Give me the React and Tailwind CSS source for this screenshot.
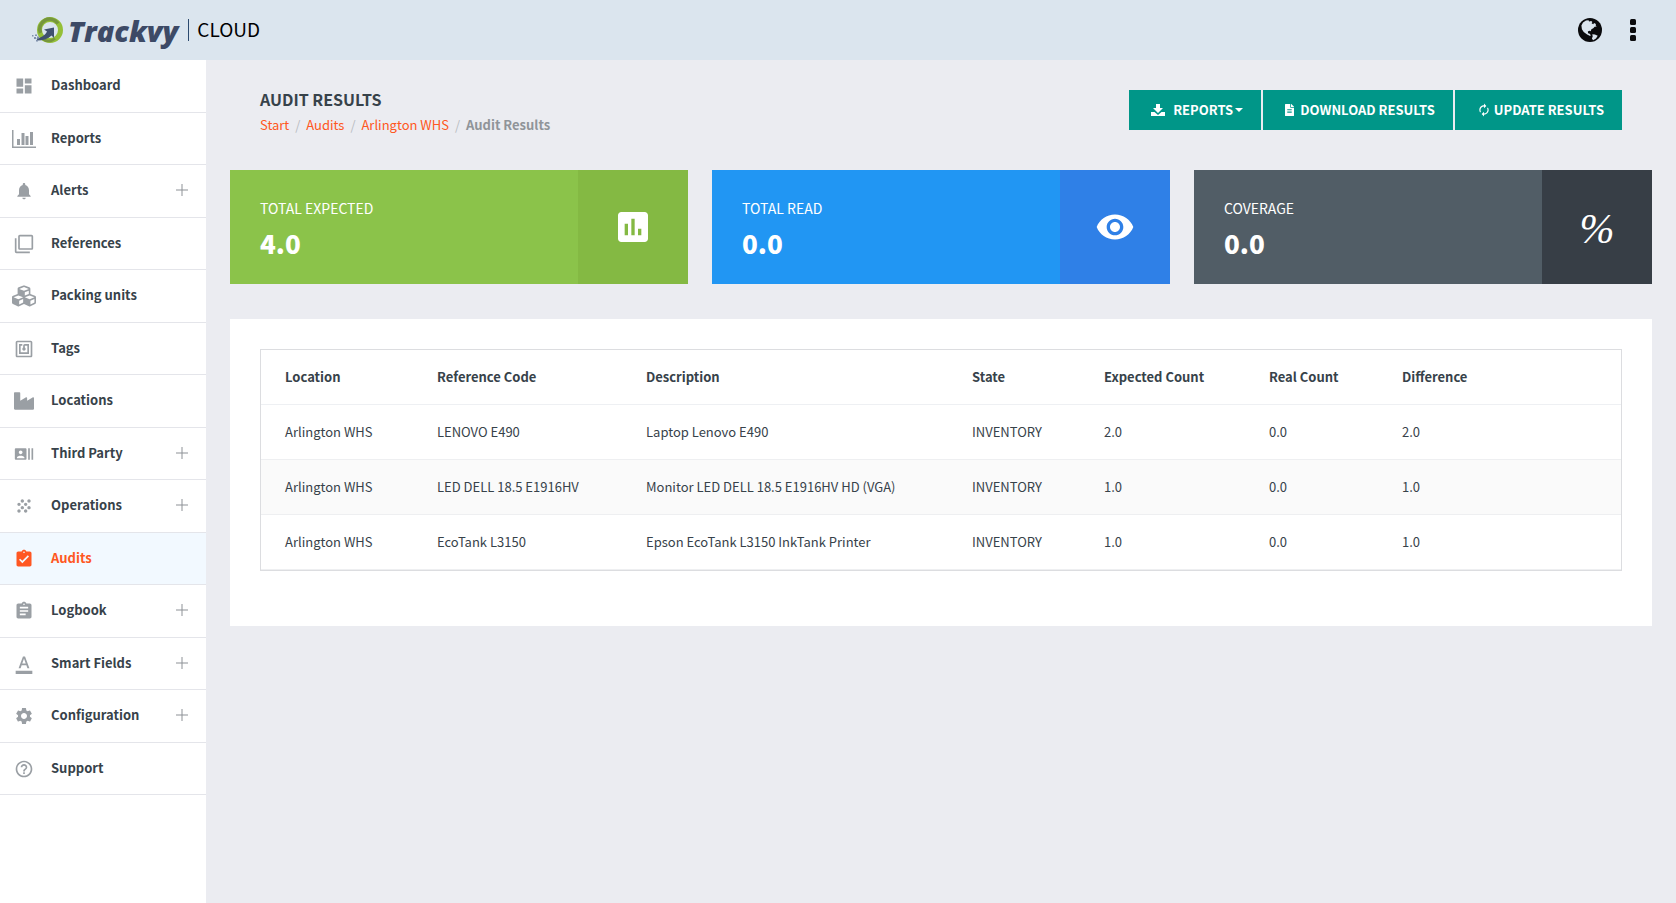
import React, { useState } from 'react';
import clsx from 'clsx';
import {
  MdAssessment,
  MdAssignment,
  MdAssignmentTurnedIn,
  MdAutorenew,
  MdDashboard,
  MdFilterNone,
  MdFormatColorText,
  MdGrain,
  MdHelpOutline,
  MdNfc,
  MdNotifications,
  MdRecentActors,
  MdSettings,
  MdVisibility,
} from 'react-icons/md';
import { FaCubes, FaFileAlt, FaIndustry } from 'react-icons/fa';

function BarChartIcon({ className }) {
  return (
    <svg viewBox="0 0 24 18" fill="currentColor" className={className}>
      <path d="M0 0h1.5v16.5H24V18H0z" />
      <path d="M5 9h3v6H5zM9.500 3h3v12h-3zM13.500 6h3v9h-3zM18 2h3v13h-3z" />
    </svg>
  );
}

function GlobeIcon({ className }) {
  return (
    <svg viewBox="0 0 24 24" className={className}>
      <circle cx="12" cy="12" r="12" fill="#0b0b0d" />
      <path
        fill="#dbe5ee"
        d="M5 4.500 8 2.600l2.500-.4.600 1.200 2.100-.5 1.200 1-.8 1.400 1.600.9.900-1.300 1.800 1.200-.2 1.500 1 .8-2.100.4-1.300 1.400-1.900 1.100-.7 1.900-1.300-.4-1.600.8.300 1.600 1.600.5 1.100 1.500-.7.900-3-1.500L5.700 14 3.900 11.200 3.400 7.500z"
      />
      <path fill="#dbe5ee" d="m14.300 16.300 2.600.2 2.800 1.300-1.700 2.800-2.900 1.700-1.200-1.900.8-1.900z" />
    </svg>
  );
}

function DotsIcon({ className }) {
  return (
    <svg viewBox="0 0 6 22" fill="#0b0b0d" className={className}>
      <rect width="6" height="6" rx="1.500" />
      <rect y="8" width="6" height="6" rx="1.500" />
      <rect y="16" width="6" height="6" rx="1.500" />
    </svg>
  );
}

function DownloadIcon({ className }) {
  return (
    <svg viewBox="0 0 14 12" fill="currentColor" className={className}>
      <path d="M5 0h4v4h3L7 9 2 4h3z" />
      <path d="M0 8h3.500L7 11l3.500-3H14v4H0z" />
    </svg>
  );
}

function Logo() {
  return (
    <a href="#" className="flex items-center gap-1">
      <svg viewBox="0 0 32 28" className="h-7 w-8">
        <circle cx="18" cy="14" r="10.500" fill="none" stroke="#94bf37" strokeWidth="5" />
        <path d="M8.500 17a10 10 0 0 1 17.500-9.500" fill="none" stroke="#76963c" strokeWidth="3.500" />
        <path d="M10 22.500a10 10 0 0 0 13 0" fill="none" stroke="#76963c" strokeWidth="2.500" />
        <path d="M12 13.500 22 11.500V22l-2.500-2.500C16 23 11.500 24.500 5.500 24.500L4.500 22.500C9 22 13 19.500 15 15.500z" fill="#40516f" />
        <path d="M0 19h1.500v1.500H0zM3 18.500h2V20H3zM2 21h2v2H2zM5 20.500h2v2H5zM4 24h2v1.500H4z" fill="#7f90ab" />
      </svg>
      <span className="pt-[2px] font-['Open_Sans',sans-serif] text-[29px] leading-8 font-extrabold text-[#3d4a66] italic">
        Trackvy
      </span>
    </a>
  );
}

const menu = [
  { label: 'Dashboard', icon: MdDashboard, size: 'size-5' },
  { label: 'Reports', icon: BarChartIcon, size: 'h-[18px] w-6' },
  { label: 'Alerts', icon: MdNotifications, size: 'size-5', children: true },
  { label: 'References', icon: MdFilterNone, size: 'size-5' },
  { label: 'Packing units', icon: FaCubes, size: 'size-6' },
  { label: 'Tags', icon: MdNfc, size: 'size-5' },
  { label: 'Locations', icon: FaIndustry, size: 'size-5' },
  { label: 'Third Party', icon: MdRecentActors, size: 'size-5', children: true },
  { label: 'Operations', icon: MdGrain, size: 'size-5', children: true },
  { label: 'Audits', icon: MdAssignmentTurnedIn, size: 'size-5' },
  { label: 'Logbook', icon: MdAssignment, size: 'size-5', children: true },
  { label: 'Smart Fields', icon: MdFormatColorText, size: 'size-5', children: true },
  { label: 'Configuration', icon: MdSettings, size: 'size-5', children: true },
  { label: 'Support', icon: MdHelpOutline, size: 'size-5' },
];

function Sidebar() {
  const [active, setActive] = useState('Audits');

  return (
    <nav className="w-[206px] shrink-0 bg-white">
      <ul>
        {menu.map(({ label, icon: Icon, size, children }) => (
          <li key={label} className="border-b border-[#e4e5ea] odd:h-[53px] even:h-[52px]">
            <a
              href="#"
              onClick={() => setActive(label)}
              className={clsx(
                'flex h-full items-center pr-[18px] pl-3 text-[13px] leading-5 font-bold',
                active === label ? 'bg-[#f2f9ff] text-[#ff5722]' : 'text-[#37424a]'
              )}
            >
              <span className={clsx('flex w-6 justify-center', active !== label && 'text-[#9a9fa4]')}>
                <Icon className={size} />
              </span>
              <span className="ml-[15px] flex-1 pb-[2px]">{label}</span>
              {children && (
                <svg viewBox="0 0 12 12" className="mb-[2px] size-3" stroke="#8d9196">
                  <path d="M6 0v12M0 6h12" />
                </svg>
              )}
            </a>
          </li>
        ))}
      </ul>
    </nav>
  );
}

const crumbs = ['Start', 'Audits', 'Arlington WHS'];

const stats = [
  { label: 'TOTAL EXPECTED', value: '4.0', bg: 'bg-[#8bc34a]', side: 'bg-[#84b943]', icon: <MdAssessment className="size-10" /> },
  { label: 'TOTAL READ', value: '0.0', bg: 'bg-[#2196f3]', side: 'bg-[#2f80e7]', icon: <MdVisibility className="size-10" /> },
  {
    label: 'COVERAGE',
    value: '0.0',
    bg: 'bg-[#515d66]',
    side: 'bg-[#373e46]',
    icon: <span className="pt-1 font-['Liberation_Serif',serif] text-[42px] leading-10 italic">%</span>,
  },
];

const columns = [
  { name: 'Location', width: 'w-[152px]' },
  { name: 'Reference Code', width: 'w-[209px]' },
  { name: 'Description', width: 'w-[326px]' },
  { name: 'State', width: 'w-[132px]' },
  { name: 'Expected Count', width: 'w-[165px]' },
  { name: 'Real Count', width: 'w-[133px]' },
  { name: 'Difference', width: 'w-auto' },
];

const rows = [
  ['Arlington WHS', 'LENOVO E490', 'Laptop Lenovo E490', 'INVENTORY', '2.0', '0.0', '2.0'],
  ['Arlington WHS', 'LED DELL 18.5 E1916HV', 'Monitor LED DELL 18.5 E1916HV HD (VGA)', 'INVENTORY', '1.0', '0.0', '1.0'],
  ['Arlington WHS', 'EcoTank L3150', 'Epson EcoTank L3150 InkTank Printer', 'INVENTORY', '1.0', '0.0', '1.0'],
];

export default function App() {
  return (
    <div className="flex min-h-screen flex-col bg-[#ebecf1] font-['Noto_Sans_CJK_SC',sans-serif] text-[13px] leading-5 text-[#37424a]">
      <header className="flex h-[60px] items-center bg-[#dbe5ee] pr-10 pl-8">
        <Logo />
        <span className="ml-[10px] h-[22px] w-px bg-[#2c4a6e]" />
        <span className="ml-2 pb-[2px] text-[19px] leading-7 text-black">CLOUD</span>
        <div className="ml-auto flex items-center gap-7">
          <button type="button" aria-label="Language">
            <GlobeIcon className="size-6" />
          </button>
          <button type="button" aria-label="More options">
            <DotsIcon className="h-[22px] w-[6px]" />
          </button>
        </div>
      </header>

      <div className="flex flex-1">
        <Sidebar />

        <main className="min-w-0 flex-1 px-6">
          {/* Page heading */}
          <div className="flex items-start justify-between px-[30px] pt-[30px]">
            <div>
              <h1 className="text-base leading-[18px] font-bold">AUDIT RESULTS</h1>
              <ol className="mt-[7px] flex">
                {crumbs.map((c) => (
                  <li key={c} className="flex">
                    <a href="#" className="text-[#ff5722]">{c}</a>
                    <span className="w-[17px] pl-[6px] text-[#b9bcc2]">/</span>
                  </li>
                ))}
                <li className="font-bold text-[#909499]">Audit Results</li>
              </ol>
            </div>
            <div className="flex gap-[2px] font-bold text-white">
              <button type="button" className="flex h-10 items-center bg-[#009688] pr-[18px] pl-[22px]">
                <DownloadIcon className="mr-2 h-3 w-[14px]" />
                REPORTS
                <svg viewBox="0 0 8 4" className="ml-[2px] h-1 w-2" fill="currentColor">
                  <path d="M0 0h8L4 4z" />
                </svg>
              </button>
              <button type="button" className="flex h-10 items-center bg-[#009688] pr-[18px] pl-[22px]">
                <FaFileAlt className="mr-[6px] h-3 w-[9px]" />
                DOWNLOAD RESULTS
              </button>
              <button type="button" className="flex h-10 items-center bg-[#009688] pr-[18px] pl-[22px]">
                <MdAutorenew className="mr-[3px] size-[14px]" />
                UPDATE RESULTS
              </button>
            </div>
          </div>

          {/* Totals */}
          <div className="mt-[35px] grid grid-cols-3 gap-6">
            {stats.map((s) => (
              <section key={s.label} className={clsx('flex h-[114px] text-white', s.bg)}>
                <div className="flex-1 pt-7 pl-[30px]">
                  <h2 className="text-sm leading-5">{s.label}</h2>
                  <p className="mt-[11px] text-[26px] leading-7 font-black">{s.value}</p>
                </div>
                <div className={clsx('flex w-[110px] items-center justify-center', s.side)}>{s.icon}</div>
              </section>
            ))}
          </div>

          {/* Results table */}
          <div className="mt-[35px] bg-white px-[30px] pt-[30px] pb-[55px]">
            <div className="border border-[#dcdde0]">
              <table className="w-full table-fixed border-separate border-spacing-0 text-left">
                <thead>
                  <tr>
                    {columns.map((col) => (
                      <th key={col.name} className={clsx('h-[55px] border-b border-[#eef0f3] pl-6 font-bold', col.width)}>
                        {col.name}
                      </th>
                    ))}
                  </tr>
                </thead>
                <tbody>
                  {rows.map((row, i) => (
                    <tr key={i} className="even:bg-[#fafafa]">
                      {row.map((cell, j) => (
                        <td key={j} className="h-[55px] border-b border-[#eeeff1] pl-6">{cell}</td>
                      ))}
                    </tr>
                  ))}
                </tbody>
              </table>
            </div>
          </div>
        </main>
      </div>
    </div>
  );
}
